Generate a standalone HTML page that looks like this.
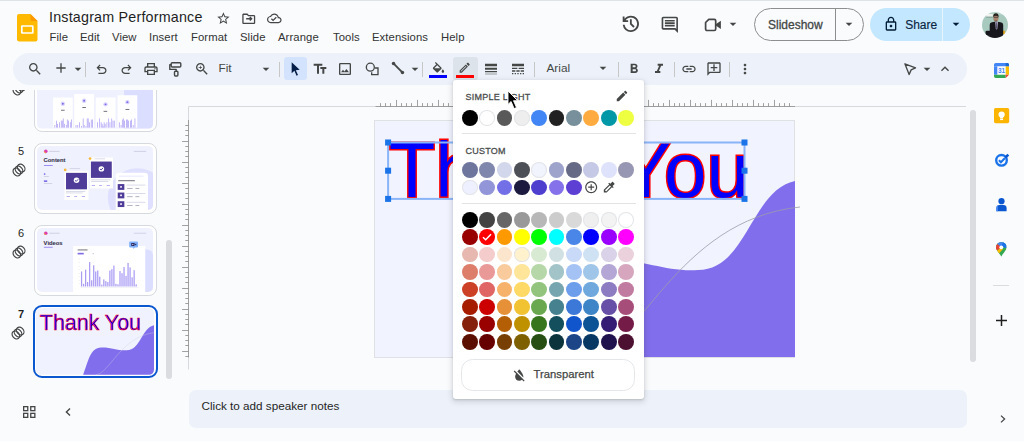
<!DOCTYPE html>
<html lang="en">
<head>
<meta charset="utf-8">
<title>Instagram Performance - Google Slides</title>
<style>
*{box-sizing:border-box;margin:0;padding:0}
html,body{width:1024px;height:441px;overflow:hidden;background:#f9fbfd;font-family:"Liberation Sans",sans-serif;color:#1f1f1f}
.abs{position:absolute}
#app{position:relative;width:1024px;height:441px;overflow:hidden;background:#f9fbfd}
#app>div,#app>svg{position:absolute}
#topline{left:0;top:0;width:1024px;height:1px;background:#dfe2e6}
#title{left:49px;top:9px;font-size:14.3px;line-height:17px;color:#1f1f1f;white-space:nowrap;letter-spacing:.2px}
.menu{top:30.600px;font-size:11.3px;line-height:13px;color:#333;white-space:nowrap;letter-spacing:.08px}
#toolbar{left:13px;top:53px;width:953.500px;height:32px;border-radius:16px;background:#edf2fa}
.tbtxt{font-size:11.8px;line-height:14px;color:#444746;white-space:nowrap;top:61px}
.sep{width:1px;height:15px;background:#c7c7c7;top:61.500px}
svg{position:absolute;overflow:visible}
.ic{fill:#444746}
.btnsel{left:283.500px;top:56.500px;width:23px;height:23px;border-radius:3px;background:#d3e3fd}
.btnact{left:453px;top:56.500px;width:24.500px;height:23px;border-radius:3px;background:#dde3ea}
#slideshow{left:754px;top:8.300px;width:110px;height:32.300px;border:1px solid #8c8f8d;border-radius:17px}
#slideshow span{position:absolute;left:13px;top:9px;font-size:12px;line-height:14px;color:#444746;-webkit-text-stroke:.3px #444746}
#slideshow i{position:absolute;left:79.700px;top:0;width:1px;height:30.500px;background:#8c8f8d}
#share{left:870.200px;top:8.300px;width:99.800px;height:32.300px;border-radius:17px;background:#c2e7ff}
#share span{position:absolute;left:35px;top:10px;font-size:12px;line-height:14px;color:#0a2540;-webkit-text-stroke:.15px #0a2540}
#share i{position:absolute;left:72px;top:0;width:1px;height:32.500px;background:#e8f4fd}
/* filmstrip */
#film{left:0;top:90px;width:180px;height:296px;overflow:hidden}
.thumb{position:absolute;left:34px;width:122.500px;height:71px;border:1px solid #d6d9dd;border-radius:8px;background:#fff;overflow:hidden}
.thumb>svg{left:2.200px;top:2.200px;border-radius:5px;overflow:hidden}
.num{position:absolute;left:11px;width:20px;text-align:center;font-size:11px;line-height:12px;color:#1f1f1f}
/* canvas */
#slide{left:374px;top:120px;width:421.400px;height:237.500px;background:#f1f3ff;border:1px solid #dfe1e5;overflow:hidden}
#notes{left:189px;top:390px;width:777.500px;height:38px;border-radius:7px;background:#edf2fa}
#notes span{position:absolute;left:12.500px;top:8.700px;font-size:11.7px;line-height:14px;color:#1f1f1f}
/* popup */
#popup{left:453px;top:80px;width:190.500px;height:318.500px;background:#fff;border-radius:3px;box-shadow:0 1px 2px rgba(60,64,67,.2),0 2px 5px 2px rgba(60,64,67,.13)}
#popup>div,#pin2>div,#pin2>span{position:absolute}
.hd{font-size:9px;line-height:10px;letter-spacing:.25px;color:#4a4d4c;-webkit-text-stroke:.28px #4a4d4c;left:12.500px;white-space:nowrap}
.c{width:15.800px;height:15.800px;border-radius:50%}
.hr{left:8.500px;width:174px;height:1px;background:#e3e3e3}
#transp{left:8.300px;top:278.300px;width:174.200px;height:31.800px;border:1px solid #e4e7ea;border-radius:11.500px}
#transp span{position:absolute;left:71.200px;top:8.400px;font-size:11.3px;line-height:13px;color:#444746;-webkit-text-stroke:.25px #444746;white-space:nowrap}
</style>
</head>
<body>
<div id="app">
<div id="topline"></div>
<!-- HEADER -->
<svg id="logo" style="left:17px;top:13.500px" width="20.500" height="27.500" viewBox="0 0 20.500 27.500">
  <path d="M2 0H13.500l7 7v18.500a2 2 0 0 1-2 2H2a2 2 0 0 1-2-2V2a2 2 0 0 1 2-2z" fill="#ffba00"/>
  <path d="M13.500 0l7 7h-5.500a1.500 1.500 0 0 1-1.500-1.500z" fill="#fb9a00"/>
  <rect x="4.800" y="12" width="11" height="7" rx="0.300" fill="none" stroke="#fff" stroke-width="1.700"/>
</svg>
<div id="title">Instagram Performance</div>
<div class="menu" style="left:49.500px">File</div>
<div class="menu" style="left:80px">Edit</div>
<div class="menu" style="left:112px">View</div>
<div class="menu" style="left:149px">Insert</div>
<div class="menu" style="left:191px">Format</div>
<div class="menu" style="left:240px">Slide</div>
<div class="menu" style="left:278px">Arrange</div>
<div class="menu" style="left:333px">Tools</div>
<div class="menu" style="left:372px">Extensions</div>
<div class="menu" style="left:441px">Help</div>
<!-- star / move / cloud -->
<svg class="ic" style="left:215.600px;top:11.300px" width="14.800" height="14.800" viewBox="0 0 24 24"><path d="M22 9.240l-7.190-.62L12 2 9.190 8.630 2 9.240l5.460 4.730L5.820 21 12 17.270 18.180 21l-1.630-7.030L22 9.240zM12 15.400l-3.760 2.270 1-4.280-3.320-2.880 4.380-.38L12 6.100l1.710 4.040 4.380.38-3.320 2.880 1 4.280L12 15.400z"/></svg>
<svg class="ic" style="left:240.700px;top:10.900px" width="15.500" height="15.500" viewBox="0 0 24 24"><path d="M20 6h-8l-2-2H4c-1.100 0-2 .9-2 2v12c0 1.100.9 2 2 2h16c1.100 0 2-.9 2-2V8c0-1.100-.9-2-2-2zm0 12H4V6h5.170l2 2H20v10zm-7.160-4.170l1.590 1.590L18 12l-3.590-3.410-1.580 1.580L13.660 11H8v2h5.660z"/></svg>
<svg class="ic" style="left:266.900px;top:10.800px" width="14.600" height="14.600" viewBox="0 0 24 24"><path d="M19.350 10.040C18.670 6.590 15.640 4 12 4 9.110 4 6.600 5.640 5.350 8.040 2.340 8.360 0 10.910 0 14c0 3.310 2.690 6 6 6h13c2.760 0 5-2.240 5-5 0-2.640-2.050-4.780-4.650-4.960zM19 18H6c-2.210 0-4-1.790-4-4 0-2.050 1.530-3.760 3.560-3.970l1.070-.11.500-.95C8.080 7.140 9.940 6 12 6c2.620 0 4.880 1.860 5.390 4.430l.3 1.500 1.530.11c1.560.1 2.780 1.410 2.780 2.960 0 1.650-1.350 3-3 3zm-9-3.820l-2.090-2.090L6.500 13.500 10 17l6.010-6.010-1.410-1.410z"/></svg>
<!-- history / comment / meet -->
<svg class="ic" style="left:620px;top:13.300px" width="21.700" height="21.700" viewBox="0 -960 960 960"><path d="M480-120q-138 0-240.500-91.500T122-440h82q14 104 92.500 172T480-200q117 0 198.500-81.500T760-480q0-117-81.500-198.500T480-760q-69 0-129 32t-101 88h110v80H120v-240h80v94q51-64 124.500-99T480-840q75 0 140.500 28.500t114 77q48.500 48.500 77 114T840-480q0 75-28.500 140.500t-77 114q-48.500 48.500-114 77T480-120Zm112-192L440-464v-216h80v184l128 128-56 56Z"/></svg>
<svg class="ic" style="left:660px;top:15.200px" width="19.600" height="19.600" viewBox="0 0 24 24"><path d="M21.990 4c0-1.100-.89-2-1.990-2H4c-1.100 0-2 .9-2 2v12c0 1.100.9 2 2 2h14l4 4-.01-18zM20 4v13.170L18.830 16H4V4h16zM6 12h12v2H6zm0-3h12v2H6zm0-3h12v2H6z"/></svg>
<svg style="left:704px;top:17px" width="18" height="16" viewBox="0 0 18 16"><path d="M4.800 2.300H10.300a1.400 1.400 0 0 1 1.400 1.400V12.100a1.400 1.400 0 0 1-1.400 1.400H3a1.400 1.400 0 0 1-1.400-1.400V5.500z" fill="none" stroke="#444746" stroke-width="1.700" stroke-linejoin="round"/><path d="M11.700 7.300l5.200-3.500v8.200l-5.200-3.500z" fill="#444746"/></svg>
<svg class="ic" style="left:724.800px;top:16.400px" width="16" height="16" viewBox="0 0 24 24"><path d="M7 10l5 5 5-5z"/></svg>
<!-- slideshow -->
<div id="slideshow"><span>Slideshow</span><i></i></div>
<svg class="ic" style="left:841px;top:16.400px" width="16" height="16" viewBox="0 0 24 24"><path d="M7 10l5 5 5-5z"/></svg>
<!-- share -->
<div id="share"><span>Share</span><i></i></div>
<svg style="left:883px;top:15.500px" width="16" height="16" viewBox="0 0 24 24"><path fill="#001d35" d="M18 8h-1V6c0-2.760-2.240-5-5-5S7 3.240 7 6v2H6c-1.100 0-2 .9-2 2v10c0 1.100.9 2 2 2h12c1.100 0 2-.9 2-2V10c0-1.100-.9-2-2-2zM9 6c0-1.660 1.340-3 3-3s3 1.340 3 3v2H9V6zm9 14H6V10h12v10zm-6-3c1.100 0 2-.9 2-2s-.9-2-2-2-2 .9-2 2 .9 2 2 2z"/></svg>
<svg style="left:948.200px;top:16.400px" width="16" height="16" viewBox="0 0 24 24"><path fill="#001d35" d="M7 10l5 5 5-5z"/></svg>
<!-- avatar -->
<svg style="left:982.200px;top:11.700px" width="26" height="26" viewBox="0 0 26 26">
  <defs><clipPath id="av"><circle cx="13" cy="13" r="13"/></clipPath><filter id="avb" x="-10%" y="-10%" width="120%" height="120%"><feGaussianBlur stdDeviation=".45"/></filter></defs>
  <g clip-path="url(#av)"><g filter="url(#avb)">
    <rect x="-2" y="-2" width="30" height="30" fill="#a8cabe"/>
    <rect x="-2" y="-2" width="30" height="5" fill="#b5d2c8"/>
    <rect x="4.300" y="2.100" width="6.500" height="2.600" rx=".5" fill="#f1f1ee"/>
    <rect x="4.300" y="4.700" width="6.500" height=".9" fill="#7d9a92"/>
    <path d="M3.500 23V20Q3.500 18.700 5 18.700H8.500V23z" fill="#16181b"/><path d="M5 23H8.500V27H7z" fill="#2a2d31"/>
    <rect x="21" y="18.700" width="2.200" height="3.500" fill="#e5a820"/>
    <path d="M7.700 26V12.800Q7.700 10.600 10 10.300L13.800 9.600L18.500 10.300Q21.200 10.600 21.200 12.800V26z" fill="#17181c"/>
    <path d="M13.100 9.500H16.100L15.400 16.800L14.600 17.800L13.800 16.800z" fill="#a9a3bd"/>
    <path d="M14.300 10.500H15L15.200 16.200L14.650 17L14.100 16.200z" fill="#4a4766"/>
    <ellipse cx="13.900" cy="6" rx="2.600" ry="3.400" fill="#a9826d"/>
    <path d="M11.200 5.200Q11 1.300 13.900 1.300Q16.900 1.300 16.600 5.200Q16 3.600 13.900 3.700Q11.800 3.600 11.200 5.200z" fill="#26201e"/>
    <path d="M11.700 5.300H16.200" stroke="#3a2f2b" stroke-width=".7"/>
    <path d="M12.600 8.300Q13.900 9.400 15.200 8.300L14.800 9.300H13z" fill="#3f302a"/>
  </g></g>
</svg>
<!-- TOOLBAR -->
<div id="toolbar"></div>
<div class="btnsel"></div>
<div class="btnact"></div>
<svg class="ic" style="left:26.750px;top:60.800px" width="16" height="16" viewBox="0 0 24 24"><path d="M15.500 14h-.79l-.28-.27C15.410 12.590 16 11.110 16 9.500 16 5.910 13.090 3 9.500 3S3 5.910 3 9.500 5.910 16 9.500 16c1.610 0 3.090-.59 4.230-1.570l.27.280v.790l5 4.990L20.490 19l-4.990-5zm-6 0C7.010 14 5 11.990 5 9.500S7.010 5 9.500 5 14 7.010 14 9.500 11.990 14 9.500 14z"/></svg>
<svg class="ic" style="left:52.700px;top:60.300px" width="16" height="16" viewBox="0 0 24 24"><path d="M19 13h-6v6h-2v-6H5v-2h6V5h2v6h6v2z"/></svg>
<svg class="ic" style="left:69.700px;top:61px" width="16" height="16" viewBox="0 0 24 24"><path d="M7 10l5 5 5-5z"/></svg>
<div class="sep" style="left:85.200px"></div>
<svg class="ic" style="left:93.700px;top:61.700px" width="15" height="15" viewBox="0 0 24 24"><path d="M7 19v-2h7.100q1.575 0 2.738-1T18 13.500 16.838 11 14.100 10H7.800l2.600 2.600L9 14 4 9l5-5 1.400 1.400L7.800 8h6.300q2.425 0 4.163 1.575T20 13.500t-1.737 3.925T14.100 19H7z"/></svg>
<svg class="ic" style="left:118.500px;top:61.700px" width="15" height="15" viewBox="0 0 24 24"><path transform="translate(24 0) scale(-1 1)" d="M7 19v-2h7.100q1.575 0 2.738-1T18 13.500 16.838 11 14.100 10H7.800l2.600 2.600L9 14 4 9l5-5 1.400 1.400L7.800 8h6.300q2.425 0 4.163 1.575T20 13.500t-1.737 3.925T14.100 19H7z"/></svg>
<svg class="ic" style="left:143.200px;top:60.500px" width="16" height="16" viewBox="0 0 24 24"><path d="M19 8h-1V3H6v5H5c-1.660 0-3 1.340-3 3v6h4v4h12v-4h4v-6c0-1.660-1.340-3-3-3zM8 5h8v3H8V5zm8 12v2H8v-4h8v2zm2-2v-2H6v2H4v-4c0-.55.450-1 1-1h14c.55 0 1 .45 1 1v4h-2z"/><circle cx="18" cy="11.500" r="1"/></svg>
<svg style="left:168px;top:61px" width="16" height="16" viewBox="0 0 16 16" fill="none" stroke="#444746" stroke-width="1.400" stroke-linejoin="round"><rect x="3.200" y="1.700" width="9.600" height="4.300" rx="1"/><path d="M3.200 3.800H1.800V8.400H8.200V10.200"/><rect x="6.500" y="10.200" width="3.400" height="4.800" rx=".9"/></svg>
<svg class="ic" style="left:193.600px;top:61.300px" width="16" height="16" viewBox="0 0 24 24"><path d="M15.500 14h-.79l-.28-.27C15.410 12.590 16 11.110 16 9.500 16 5.910 13.090 3 9.500 3S3 5.910 3 9.500 5.910 16 9.500 16c1.610 0 3.090-.59 4.230-1.570l.27.280v.790l5 4.990L20.490 19l-4.990-5zm-6 0C7.010 14 5 11.990 5 9.500S7.010 5 9.500 5 14 7.010 14 9.500 11.990 14 9.500 14z"/><path d="M12 10h-2v2H9v-2H7V9h2V7h1v2h2v1z"/></svg>
<div class="tbtxt" style="left:218.500px">Fit</div>
<svg class="ic" style="left:258.200px;top:61px" width="16" height="16" viewBox="0 0 24 24"><path d="M7 10l5 5 5-5z"/></svg>
<div class="sep" style="left:279.200px"></div>
<svg style="left:287px;top:61px" width="16" height="16" viewBox="0 0 24 24"><path fill="#041e49" d="M7 2l12 11.200-5.800.5 3.300 7.300-2.200 1-3.200-7.400L7 18.500V2z"/></svg>
<svg class="ic" style="left:311.500px;top:60.700px" width="16" height="16" viewBox="0 0 24 24"><path d="M2.500 4v3h5v12h3V7h5V4h-13zm19 5h-9v3h3v7h3v-7h3V9z"/></svg>
<svg class="ic" style="left:337.300px;top:61px" width="16" height="16" viewBox="0 0 24 24"><path d="M19 5v14H5V5h14m0-2H5c-1.100 0-2 .9-2 2v14c0 1.100.9 2 2 2h14c1.100 0 2-.9 2-2V5c0-1.100-.9-2-2-2zm-4.860 8.860l-3 3.870L9 13.140 6 17h12l-3.860-5.140z"/></svg>
<svg style="left:364.200px;top:60.700px" width="16" height="16" viewBox="0 0 24 24"><circle cx="9.500" cy="9.300" r="6" fill="none" stroke="#444746" stroke-width="2"/><path d="M16.500 10.500H21V20.500H11.500V17" fill="none" stroke="#444746" stroke-width="2"/></svg>
<svg style="left:389.900px;top:59.900px" width="16" height="16" viewBox="0 0 24 24"><path d="M5.500 5.500L18.500 18.500" stroke="#444746" stroke-width="2.800"/><circle cx="5.300" cy="5.300" r="2.600" fill="#444746"/><circle cx="18.700" cy="18.700" r="2.600" fill="#444746"/></svg>
<svg class="ic" style="left:406.600px;top:61px" width="16" height="16" viewBox="0 0 24 24"><path d="M7 10l5 5 5-5z"/></svg>
<div class="sep" style="left:422px"></div>
<svg class="ic" style="left:430.500px;top:61.700px" width="15" height="15" viewBox="0 0 24 24"><path d="M16.560 8.940L7.620 0 6.210 1.410l2.380 2.380-5.150 5.150c-.59.590-.59 1.540 0 2.120l5.500 5.500c.29.290.68.440 1.060.44s.77-.15 1.060-.44l5.500-5.500c.59-.58.590-1.530 0-2.120zM5.210 10L10 5.210 14.790 10H5.210zM19 11.500s-2 2.170-2 3.500c0 1.100.9 2 2 2s2-.9 2-2c0-1.330-2-3.500-2-3.500z"/></svg>
<div style="left:429px;top:75px;width:18px;height:2.800px;background:#0000ff"></div>
<svg class="ic" style="left:458.300px;top:61.100px" width="13.400" height="13.400" viewBox="0 0 24 24"><path d="M14.060 9.020l.92.920L5.920 19H5v-.92l9.060-9.060M17.660 3c-.25 0-.51.100-.7.290l-1.830 1.830 3.750 3.750 1.830-1.830c.39-.39.390-1.020 0-1.410l-2.340-2.340c-.2-.2-.45-.29-.71-.29zm-3.600 3.190L3 17.250V21h3.750L17.810 9.940l-3.750-3.750z"/></svg>
<div style="left:456px;top:75px;width:17.600px;height:2.800px;background:#ff0000"></div>
<svg class="ic" style="left:483.400px;top:60.900px" width="16" height="16" viewBox="0 0 24 24"><path d="M3 17h18v-2H3v2zm0 3h18v-1H3v1zm0-7h18v-3H3v3zm0-9v4h18V4H3z"/></svg>
<svg class="ic" style="left:510.400px;top:60.900px" width="16" height="16" viewBox="0 0 24 24"><path d="M3 16h5v-2H3v2zm6.500 0h5v-2h-5v2zm6.500 0h5v-2h-5v2zM3 20h2v-2H3v2zm4 0h2v-2H7v2zm4 0h2v-2h-2v2zm4 0h2v-2h-2v2zm4 0h2v-2h-2v2zM3 12h8v-2H3v2zm10 0h8v-2h-8v2zM3 4v4h18V4H3z"/></svg>
<div class="sep" style="left:534px"></div>
<div class="tbtxt" style="left:546.500px">Arial</div>
<svg class="ic" style="left:595.400px;top:60.200px" width="16" height="16" viewBox="0 0 24 24"><path d="M7 10l5 5 5-5z"/></svg>
<div class="sep" style="left:618.400px"></div>
<svg class="ic" style="left:625.800px;top:60.900px" width="16" height="16" viewBox="0 0 24 24"><path d="M15.600 10.790c.97-.67 1.650-1.770 1.650-2.790 0-2.260-1.750-4-4-4H7v14h7.040c2.090 0 3.710-1.700 3.710-3.790 0-1.520-.86-2.820-2.150-3.420zM10 6.500h3c.83 0 1.500.67 1.500 1.500s-.67 1.500-1.500 1.500h-3v-3zm3.500 9H10v-3h3.500c.83 0 1.500.67 1.500 1.500s-.67 1.500-1.500 1.500z"/></svg>
<svg class="ic" style="left:651px;top:60.900px" width="16" height="16" viewBox="0 0 24 24"><path d="M10 4v3h2.210l-3.420 8H6v3h8v-3h-2.210l3.420-8H18V4z"/></svg>
<div class="sep" style="left:674px"></div>
<svg class="ic" style="left:681.400px;top:60.800px" width="16" height="16" viewBox="0 0 24 24"><path d="M3.900 12c0-1.710 1.390-3.100 3.100-3.100h4V7H7c-2.760 0-5 2.240-5 5s2.240 5 5 5h4v-1.900H7c-1.710 0-3.100-1.390-3.100-3.100zM8 13h8v-2H8v2zm9-6h-4v1.900h4c1.710 0 3.100 1.390 3.100 3.100s-1.390 3.100-3.100 3.100h-4V17h4c2.760 0 5-2.240 5-5s-2.240-5-5-5z"/></svg>
<svg class="ic" style="left:706.400px;top:61.100px" width="16" height="16" viewBox="0 0 24 24"><path transform="translate(24 0) scale(-1 1)" d="M22 4c0-1.100-.9-2-2-2H4c-1.100 0-2 .9-2 2v12c0 1.100.9 2 2 2h14l4 4V4zm-2 13.170L18.830 16H4V4h16v13.170zM13 5h-2v4H7v2h4v4h2v-4h4V9h-4z"/></svg>
<div class="sep" style="left:729.400px"></div>
<svg class="ic" style="left:737.300px;top:60.600px" width="16" height="16" viewBox="0 0 24 24"><path d="M12 8c1.100 0 2-.9 2-2s-.9-2-2-2-2 .9-2 2 .9 2 2 2zm0 2c-1.100 0-2 .9-2 2s.9 2 2 2 2-.9 2-2-.9-2-2-2zm0 6c-1.100 0-2 .9-2 2s.9 2 2 2 2-.9 2-2-.9-2-2-2z"/></svg>
<svg style="left:902.200px;top:60.700px" width="16" height="16" viewBox="0 0 24 24"><path d="M4.300 4.300L20.300 10.300 13.700 13.300 10.700 20.300z" fill="none" stroke="#444746" stroke-width="2" stroke-linejoin="round"/></svg>
<svg class="ic" style="left:918.700px;top:60.900px" width="16" height="16" viewBox="0 0 24 24"><path d="M7 10l5 5 5-5z"/></svg>
<svg class="ic" style="left:936.500px;top:61.200px" width="16" height="16" viewBox="0 0 24 24"><path d="M7.410 15.410L12 10.830l4.590 4.580L18 14l-6-6-6 6z"/></svg>
<!-- FILMSTRIP -->
<div id="film">
  <!-- slide 4 -->
  <svg style="left:11.700px;top:-8.400px" width="14" height="14" viewBox="0 0 14 14" fill="none" stroke="#444746" stroke-width="1.200"><ellipse cx="4.800" cy="9" rx="4.300" ry="3.300" transform="rotate(50 4.800 9)"/><ellipse cx="7" cy="7" rx="4.300" ry="3.300" transform="rotate(50 7 7)"/><ellipse cx="9.200" cy="5" rx="4.300" ry="3.300" transform="rotate(50 9.200 5)"/></svg>
  <div class="thumb" style="top:-29px">
    <svg width="116.100" height="64.600" viewBox="0 0 420 237" preserveAspectRatio="none">
      <rect width="420" height="237" fill="#f0f1ff"/>
      <path d="M315 95L350 60H420V237H315z" fill="#dcdeff"/>
      <g fill="#fff"><rect x="58.300" y="123" width="70.700" height="111"/><rect x="134.700" y="110" width="71.900" height="124"/><rect x="212.700" y="123" width="71.300" height="111"/><rect x="291.300" y="114.700" width="71.500" height="119"/></g>
      <g fill="#d9d4ff"><circle cx="93.500" cy="146" r="8"/><circle cx="170.500" cy="135" r="8"/><circle cx="248" cy="148" r="8"/><circle cx="327" cy="140" r="8"/></g>
      <g fill="#7d6be8"><circle cx="93.500" cy="146" r="3.500"/><circle cx="170.500" cy="135" r="3.500"/><circle cx="248" cy="148" r="3.500"/><circle cx="327" cy="140" r="3.500"/></g>
      <g fill="#55525f"><rect x="87" y="168" width="13" height="3"/><rect x="164" y="158" width="13" height="3"/><rect x="241" y="172" width="13" height="3"/><rect x="320" y="165" width="14" height="3"/></g>
      <g fill="#a99cf5"><rect x="63.3" y="223.7" width="2.6" height="10.0"/><rect x="69.8" y="207.7" width="2.6" height="26.0"/><rect x="73.4" y="219.7" width="2.6" height="14.0"/><rect x="79.9" y="213.7" width="2.6" height="20.0"/><rect x="86.4" y="207.7" width="2.6" height="26.0"/><rect x="90.0" y="207.7" width="2.6" height="26.0"/><rect x="93.6" y="199.7" width="2.6" height="34.0"/><rect x="98.1" y="219.7" width="2.6" height="14.0"/><rect x="104.6" y="223.7" width="2.6" height="10.0"/><rect x="108.2" y="203.7" width="2.6" height="30.0"/><rect x="112.7" y="207.7" width="2.6" height="26.0"/><rect x="119.2" y="213.7" width="2.6" height="20.0"/><rect x="123.7" y="203.7" width="2.6" height="30.0"/><rect x="139.7" y="223.7" width="2.6" height="10.0"/><rect x="146.2" y="223.7" width="2.6" height="10.0"/><rect x="152.7" y="213.7" width="2.6" height="20.0"/><rect x="159.2" y="227.7" width="2.6" height="6.0"/><rect x="165.7" y="199.7" width="2.6" height="34.0"/><rect x="169.3" y="223.7" width="2.6" height="10.0"/><rect x="175.8" y="227.7" width="2.6" height="6.0"/><rect x="180.3" y="199.7" width="2.6" height="34.0"/><rect x="183.9" y="199.7" width="2.6" height="34.0"/><rect x="188.4" y="213.7" width="2.6" height="20.0"/><rect x="194.9" y="203.7" width="2.6" height="30.0"/><rect x="199.4" y="203.7" width="2.6" height="30.0"/><rect x="217.7" y="213.7" width="2.6" height="20.0"/><rect x="224.2" y="199.7" width="2.6" height="34.0"/><rect x="230.7" y="213.7" width="2.6" height="20.0"/><rect x="234.3" y="219.7" width="2.6" height="14.0"/><rect x="237.9" y="227.7" width="2.6" height="6.0"/><rect x="241.5" y="213.7" width="2.6" height="20.0"/><rect x="245.1" y="219.7" width="2.6" height="14.0"/><rect x="251.6" y="213.7" width="2.6" height="20.0"/><rect x="258.1" y="199.7" width="2.6" height="34.0"/><rect x="262.6" y="213.7" width="2.6" height="20.0"/><rect x="269.1" y="199.7" width="2.6" height="34.0"/><rect x="273.6" y="207.7" width="2.6" height="26.0"/><rect x="278.1" y="207.7" width="2.6" height="26.0"/><rect x="296.3" y="213.7" width="2.6" height="20.0"/><rect x="302.8" y="223.7" width="2.6" height="10.0"/><rect x="307.3" y="203.7" width="2.6" height="30.0"/><rect x="310.9" y="199.7" width="2.6" height="34.0"/><rect x="315.4" y="207.7" width="2.6" height="26.0"/><rect x="321.9" y="203.7" width="2.6" height="30.0"/><rect x="325.5" y="203.7" width="2.6" height="30.0"/><rect x="330.0" y="207.7" width="2.6" height="26.0"/><rect x="336.5" y="207.7" width="2.6" height="26.0"/><rect x="340.1" y="203.7" width="2.6" height="30.0"/><rect x="346.6" y="223.7" width="2.6" height="10.0"/><rect x="353.1" y="199.7" width="2.6" height="34.0"/></g>
    </svg>
  </div>
  <!-- slide 5 -->
  <div class="num" style="top:55px">5</div>
  <svg style="left:11.700px;top:73.100px" width="14" height="14" viewBox="0 0 14 14" fill="none" stroke="#444746" stroke-width="1.200"><ellipse cx="4.800" cy="9" rx="4.300" ry="3.300" transform="rotate(50 4.800 9)"/><ellipse cx="7" cy="7" rx="4.300" ry="3.300" transform="rotate(50 7 7)"/><ellipse cx="9.200" cy="5" rx="4.300" ry="3.300" transform="rotate(50 9.200 5)"/></svg>
  <div class="thumb" style="top:52.700px">
    <svg width="116.100" height="64.600" viewBox="0 0 420 237" preserveAspectRatio="none">
      <rect width="420" height="237" fill="#f0f1ff"/>
      <circle cx="363" cy="189" r="107" fill="#dfe0ff"/>
      <circle cx="31.800" cy="19.700" r="6.500" fill="#d940b0"/><path d="M25.500 18a6.500 6.500 0 0 0 8 8z" fill="#f9a23c"/>
      <rect x="44" y="18" width="38" height="3" fill="#c9cada"/><rect x="350" y="18" width="45" height="3" fill="#c9cade"/>
      <text x="24" y="60" font-family="Liberation Sans, sans-serif" font-weight="bold" font-size="21" fill="#343249" stroke="#343249" stroke-width="0.300">Content</text>
      <rect x="25" y="70" width="32" height="3" fill="#8a78ef"/>
      <rect x="25" y="100" width="5" height="6" fill="#7d6be8"/><rect x="25" y="111" width="18" height="2.500" fill="#c5c6d8"/>
      <rect x="25" y="126" width="12" height="6" fill="#7d6be8"/><rect x="25" y="137" width="30" height="2.500" fill="#c5c6d8"/>
      <rect x="99.700" y="91" width="86.500" height="107" fill="#fff"/>
      <rect x="105" y="98.600" width="75.800" height="60.400" fill="#4f3c99"/>
      <circle cx="143" cy="126" r="10" fill="#fff"/><path d="M138 126l4 4 7-8" stroke="#4f3c99" stroke-width="3.500" fill="none"/>
      <rect x="105" y="165" width="70" height="2.500" fill="#c9cade"/><rect x="105" y="171" width="60" height="2.500" fill="#c9cade"/>
      <rect x="107" y="184" width="12" height="3" fill="#a99cf5"/><rect x="135" y="184" width="10" height="3" fill="#a99cf5"/><rect x="162" y="184" width="12" height="3" fill="#a99cf5"/>
      <circle cx="102" cy="88" r="5" fill="#f5b93e"/>
      <rect x="118" y="82" width="38" height="2.500" fill="#c9cade"/>
      <rect x="192" y="42" width="82.800" height="113.800" fill="#fff"/>
      <rect x="195" y="57" width="75.500" height="60" fill="#4f3c99"/>
      <circle cx="233" cy="84" r="10" fill="#fff"/><path d="M228 84l4 4 7-8" stroke="#4f3c99" stroke-width="3.500" fill="none"/>
      <rect x="196" y="123" width="70" height="2.500" fill="#c9cade"/><rect x="196" y="129" width="62" height="2.500" fill="#c9cade"/>
      <rect x="198" y="143" width="12" height="3" fill="#a99cf5"/><rect x="225" y="143" width="10" height="3" fill="#a99cf5"/><rect x="252" y="143" width="12" height="3" fill="#a99cf5"/>
      <circle cx="192" cy="46" r="5" fill="#f5b93e"/>
      <rect x="208" y="46" width="38" height="2.500" fill="#c9cade"/>
      <rect x="284.800" y="98.600" width="116.600" height="160" rx="12" fill="#fff"/>
      <rect x="296" y="108" width="90" height="6" rx="3" fill="#eeefff"/>
      <rect x="294" y="126" width="60" height="3" fill="#55525f"/>
      <g fill="#4f3c99"><rect x="292" y="139.700" width="24" height="21.300"/><rect x="292" y="170.800" width="24" height="21.300"/><rect x="292" y="202.600" width="24" height="21.400"/></g>
      <g fill="#fff"><rect x="301" y="147" width="6" height="6"/><rect x="301" y="178" width="6" height="6"/><rect x="301" y="210" width="6" height="6"/></g>
      <g fill="#c9cade"><rect x="324" y="142" width="68" height="2.500"/><rect x="324" y="173" width="68" height="2.500"/><rect x="324" y="205" width="68" height="2.500"/></g>
      <g fill="#8d8fa6"><rect x="326" y="154" width="20" height="2.500"/><rect x="356" y="154" width="14" height="2.500"/><rect x="326" y="185" width="20" height="2.500"/><rect x="356" y="185" width="14" height="2.500"/><rect x="326" y="217" width="20" height="2.500"/><rect x="356" y="217" width="14" height="2.500"/></g>
    </svg>
  </div>
  <!-- slide 6 -->
  <div class="num" style="top:137px">6</div>
  <svg style="left:11.700px;top:155px" width="14" height="14" viewBox="0 0 14 14" fill="none" stroke="#444746" stroke-width="1.200"><ellipse cx="4.800" cy="9" rx="4.300" ry="3.300" transform="rotate(50 4.800 9)"/><ellipse cx="7" cy="7" rx="4.300" ry="3.300" transform="rotate(50 7 7)"/><ellipse cx="9.200" cy="5" rx="4.300" ry="3.300" transform="rotate(50 9.200 5)"/></svg>
  <div class="thumb" style="top:134.500px">
    <svg width="116.100" height="64.600" viewBox="0 0 420 237" preserveAspectRatio="none">
      <rect width="420" height="237" fill="#f0f1ff"/>
      <path d="M391 78.600h10q19 4 19 24V237H391z" fill="#dcdeff"/>
      <circle cx="31.800" cy="19" r="6.500" fill="#d940b0"/><path d="M25.500 17.300a6.500 6.500 0 0 0 8 8z" fill="#f9a23c"/>
      <rect x="44" y="17.500" width="38" height="3" fill="#c9cada"/><rect x="350" y="17.500" width="45" height="3" fill="#c9cade"/>
      <text x="24" y="60.800" font-family="Liberation Sans, sans-serif" font-weight="bold" font-size="21" fill="#343249" stroke="#343249" stroke-width="0.300">Videos</text>
      <rect x="25" y="69" width="32" height="3" fill="#8a78ef"/>
      <rect x="130.500" y="65.800" width="261" height="175" fill="#fff"/>
      <rect x="147" y="79" width="36" height="3" fill="#55525f"/>
      <rect x="147" y="91" width="22" height="6" fill="#7d6be8"/><rect x="201" y="92" width="5" height="4" fill="#c9cade"/>
      <g fill="#d5d6e4"><rect x="151" y="113" width="4" height="1.500"/><rect x="151" y="126" width="4" height="1.500"/><rect x="151" y="139" width="4" height="1.500"/><rect x="151" y="152" width="4" height="1.500"/><rect x="151" y="165" width="4" height="1.500"/><rect x="151" y="178" width="4" height="1.500"/><rect x="151" y="191" width="4" height="1.500"/><rect x="151" y="204" width="4" height="1.500"/><rect x="157" y="216" width="210" height="1.500"/></g>
      <g fill="#a99cf5"><rect x="159.0" y="159.4" width="4.5" height="55.1"/><rect x="166.3" y="204.8" width="4.5" height="9.7"/><rect x="173.6" y="152.9" width="4.5" height="61.6"/><rect x="180.9" y="198.3" width="4.5" height="16.2"/><rect x="188.3" y="125.0" width="4.5" height="89.5"/><rect x="195.6" y="191.8" width="4.5" height="22.7"/><rect x="202.9" y="136.7" width="4.5" height="77.8"/><rect x="210.2" y="159.4" width="4.5" height="55.1"/><rect x="217.5" y="156.1" width="4.5" height="58.4"/><rect x="224.8" y="178.8" width="4.5" height="35.7"/><rect x="232.1" y="208.0" width="4.5" height="6.5"/><rect x="239.5" y="188.6" width="4.5" height="25.9"/><rect x="246.8" y="195.0" width="4.5" height="19.5"/><rect x="254.1" y="198.3" width="4.5" height="16.2"/><rect x="261.4" y="156.1" width="4.5" height="58.4"/><rect x="268.7" y="150.9" width="4.5" height="63.6"/><rect x="276.0" y="138.0" width="4.5" height="76.5"/><rect x="283.3" y="204.8" width="4.5" height="9.7"/><rect x="290.7" y="206.7" width="4.5" height="7.8"/><rect x="298.0" y="158.1" width="4.5" height="56.4"/><rect x="305.3" y="165.9" width="4.5" height="48.6"/><rect x="312.6" y="143.2" width="4.5" height="71.3"/><rect x="319.9" y="175.6" width="4.5" height="38.9"/><rect x="327.2" y="128.2" width="4.5" height="86.3"/><rect x="334.5" y="144.5" width="4.5" height="70.0"/><rect x="341.9" y="180.8" width="4.5" height="33.7"/><rect x="349.2" y="154.8" width="4.5" height="59.7"/><rect x="356.5" y="206.7" width="4.5" height="7.8"/></g>
      <rect x="333.500" y="49.700" width="32" height="22" rx="4" fill="#7fb0fb"/><path d="M345 71l5 5 5-5z" fill="#7fb0fb"/>
      <rect x="341" y="55" width="12" height="11" rx="1.500" fill="#2a2560"/><path d="M353 60.500l6-4v8z" fill="#2a2560"/><path d="M345 57.500l5 3-5 3z" fill="#fff"/>
    </svg>
  </div>
  <!-- slide 7 (selected) -->
  <div class="num" style="top:218px;font-weight:bold">7</div>
  <svg style="left:11.400px;top:236.200px" width="14" height="14" viewBox="0 0 14 14" fill="none" stroke="#444746" stroke-width="1.200"><ellipse cx="4.800" cy="9" rx="4.300" ry="3.300" transform="rotate(50 4.800 9)"/><ellipse cx="7" cy="7" rx="4.300" ry="3.300" transform="rotate(50 7 7)"/><ellipse cx="9.200" cy="5" rx="4.300" ry="3.300" transform="rotate(50 9.200 5)"/></svg>
  <div class="thumb" style="left:32.700px;top:214.500px;width:125px;height:73.700px;border:2px solid #0b57d0;border-radius:9px">
    <svg width="118" height="66.700" viewBox="0 0 420 237" preserveAspectRatio="none" style="left:1.500px;top:1.500px;overflow:hidden;border-radius:5.500px">
      <rect width="420" height="237" fill="#f1f2ff"/>
      <path d="M167.700 237C186 190 192 141 232 140C270 139 290 152 323 150C372 150 376 70 420 61V237z" fill="#816eec"/>
      <path d="M212 237C262 235 300 100 425 87" fill="none" stroke="#cfcde6" stroke-width="1.300"/>
      <text x="13.700" y="77.500" transform="translate(0 77.500) scale(1 1.03) translate(0 -77.500)" font-family="Liberation Sans, sans-serif" font-size="76.200" fill="#0000ff" stroke="#ff0000" stroke-width="1.900">Thank You</text>
    </svg>
  </div>
</div>
<!-- filmstrip scrollbar -->
<div style="left:166.300px;top:240px;width:5.600px;height:139px;border-radius:3px;background:#dadce0"></div>
<!-- bottom-left controls -->
<svg style="left:22.700px;top:405.800px" width="12.500" height="12" viewBox="0 0 12.500 12" fill="none" stroke="#444746" stroke-width="1.300"><rect x=".65" y=".65" width="4.100" height="4"/><rect x="7.750" y=".65" width="4.100" height="4"/><rect x=".65" y="7.350" width="4.100" height="4"/><rect x="7.750" y="7.350" width="4.100" height="4"/></svg>
<svg style="left:64.500px;top:408.300px" width="6" height="8" viewBox="0 0 6 8"><path d="M5 .6L1.400 4 5 7.400" fill="none" stroke="#444746" stroke-width="1.400"/></svg>
<!-- CANVAS -->
<svg style="left:0;top:0" width="1024" height="441" viewBox="0 0 1024 441" fill="none">
  <path d="M188.500 369.500V106.500H966" stroke="#d6d9dd" stroke-width="1"/>
  <path d="M375.500 106.500H795" stroke="#9e9e9e" stroke-width="1"/>
  <path d="M188.500 120V357.500" stroke="#9e9e9e" stroke-width="1"/>
  <path d="M380.5 103.1V106.5M385.5 103.1V106.5M390.5 103.1V106.5M396.5 99.9V106.5M401.5 103.1V106.5M406.5 103.1V106.5M411.5 103.1V106.5M417.5 99.9V106.5M422.5 103.1V106.5M427.5 103.1V106.5M432.5 103.1V106.5M438.5 99.9V106.5M443.5 103.1V106.5M448.5 103.1V106.5M453.5 103.1V106.5M459.5 99.9V106.5M464.5 103.1V106.5M469.5 103.1V106.5M474.5 103.1V106.5M480.5 99.9V106.5M485.5 103.1V106.5M490.5 103.1V106.5M495.5 103.1V106.5M501.5 99.9V106.5M506.5 103.1V106.5M511.5 103.1V106.5M516.5 103.1V106.5M522.5 99.9V106.5M527.5 103.1V106.5M532.5 103.1V106.5M537.5 103.1V106.5M543.5 99.9V106.5M548.5 103.1V106.5M553.5 103.1V106.5M558.5 103.1V106.5M564.5 99.9V106.5M569.5 103.1V106.5M574.5 103.1V106.5M579.5 103.1V106.5M585.5 99.9V106.5M590.5 103.1V106.5M595.5 103.1V106.5M600.5 103.1V106.5M606.5 99.9V106.5M611.5 103.1V106.5M616.5 103.1V106.5M621.5 103.1V106.5M627.5 99.9V106.5M632.5 103.1V106.5M637.5 103.1V106.5M642.5 103.1V106.5M648.5 99.9V106.5M653.5 103.1V106.5M658.5 103.1V106.5M663.5 103.1V106.5M669.5 99.9V106.5M674.5 103.1V106.5M679.5 103.1V106.5M684.5 103.1V106.5M690.5 99.9V106.5M695.5 103.1V106.5M700.5 103.1V106.5M705.5 103.1V106.5M711.5 99.9V106.5M716.5 103.1V106.5M721.5 103.1V106.5M726.5 103.1V106.5M732.5 99.9V106.5M737.5 103.1V106.5M742.5 103.1V106.5M747.5 103.1V106.5M753.5 99.9V106.5M758.5 103.1V106.5M763.5 103.1V106.5M768.5 103.1V106.5M774.5 99.9V106.5M779.5 103.1V106.5M784.5 103.1V106.5M789.5 103.1V106.5" stroke="#8a8a8a" stroke-width=".8"/>
  <path d="M185.3 125.5H188.5M185.3 130.5H188.5M185.3 135.5H188.5M182.1 141.5H188.5M185.3 146.5H188.5M185.3 151.5H188.5M185.3 156.5H188.5M182.1 162.5H188.5M185.3 167.5H188.5M185.3 172.5H188.5M185.3 177.5H188.5M182.1 183.5H188.5M185.3 188.5H188.5M185.3 193.5H188.5M185.3 198.5H188.5M182.1 204.5H188.5M185.3 209.5H188.5M185.3 214.5H188.5M185.3 219.5H188.5M182.1 225.5H188.5M185.3 230.5H188.5M185.3 235.5H188.5M185.3 240.5H188.5M182.1 246.5H188.5M185.3 251.5H188.5M185.3 256.5H188.5M185.3 261.5H188.5M182.1 267.5H188.5M185.3 272.5H188.5M185.3 277.5H188.5M185.3 282.5H188.5M182.1 288.5H188.5M185.3 293.5H188.5M185.3 298.5H188.5M185.3 303.5H188.5M182.1 309.5H188.5M185.3 314.5H188.5M185.3 319.5H188.5M185.3 324.5H188.5M182.1 330.5H188.5M185.3 335.5H188.5M185.3 340.5H188.5M185.3 345.5H188.5M182.1 351.5H188.5M185.3 356.5H188.5" stroke="#8a8a8a" stroke-width=".8"/>
</svg>
<div style="left:970.300px;top:109.500px;width:5.700px;height:252px;border-radius:3px;background:#dadce0"></div>
<div id="slide"></div>
<svg style="left:375px;top:120px" width="420" height="237" viewBox="0 0 420 237">
  <defs><clipPath id="sc"><rect width="420" height="237"/></clipPath></defs>
  <path clip-path="url(#sc)" d="M167.700 237C186 190 192 141 232 140C270 139 290 152 323 150C372 150 376 70 420 61V237z" fill="#816eec"/>
  <path d="M212 237C262 235 300 100 425 87" fill="none" stroke="#9c9cab" stroke-width=".8"/>
  <text x="13.700" y="77.500" transform="translate(0 77.500) scale(1 1.03) translate(0 -77.500)" font-family="Liberation Sans, sans-serif" font-size="76.200" fill="#0000ff" stroke="#ff0000" stroke-width="2.800" paint-order="stroke">Thank You</text>
  <rect x="13.100" y="22.500" width="356.400" height="56.400" fill="none" stroke="#8ab4f8" stroke-width="2"/>
  <g fill="#1a73e8"><rect x="10.100" y="19.500" width="6" height="6"/><rect x="10.100" y="47.700" width="6" height="6"/><rect x="10.100" y="75.900" width="6" height="6"/><rect x="188.300" y="19.500" width="6" height="6"/><rect x="188.300" y="75.900" width="6" height="6"/><rect x="366.500" y="19.500" width="6" height="6"/><rect x="366.500" y="47.700" width="6" height="6"/><rect x="366.500" y="75.900" width="6" height="6"/></g>
</svg>
<div id="notes"><span>Click to add speaker notes</span></div>
<!-- POPUP -->
<div id="popup"><div id="pin2" style="left:0;top:.5px;width:190px;height:316px">
<div class="hd" style="top:11.600px">SIMPLE LIGHT</div>
<svg style="left:161.750px;top:8.250px" width="14" height="14" viewBox="0 0 24 24"><path fill="#444746" d="M3 17.250V21h3.750L17.810 9.940l-3.750-3.750L3 17.250zM20.710 7.040c.39-.39.39-1.020 0-1.410l-2.340-2.340c-.39-.39-1.020-.39-1.410 0l-1.830 1.830 3.750 3.750 1.830-1.830z"/></svg>
<div class="c" style="left:8.9px;top:29.8px;background:#000000"></div><div class="c" style="left:26.3px;top:29.8px;background:#ffffff;box-shadow:inset 0 0 0 1px #e3e5e8"></div><div class="c" style="left:43.6px;top:29.8px;background:#595959"></div><div class="c" style="left:61.0px;top:29.8px;background:#eeeeee;box-shadow:inset 0 0 0 1px #e3e5e8"></div><div class="c" style="left:78.3px;top:29.8px;background:#4285f4"></div><div class="c" style="left:95.7px;top:29.8px;background:#212121"></div><div class="c" style="left:113.1px;top:29.8px;background:#78909c"></div><div class="c" style="left:130.4px;top:29.8px;background:#ffab40"></div><div class="c" style="left:147.8px;top:29.8px;background:#0097a7"></div><div class="c" style="left:165.1px;top:29.8px;background:#eeff41"></div>
<div class="hr" style="top:52.600px"></div>
<div class="hd" style="top:65.400px">CUSTOM</div>
<div class="c" style="left:8.9px;top:81.6px;background:#6e769e"></div><div class="c" style="left:26.3px;top:81.6px;background:#8087ac"></div><div class="c" style="left:43.6px;top:81.6px;background:#d3d7ec"></div><div class="c" style="left:61.0px;top:81.6px;background:#4d5057"></div><div class="c" style="left:78.3px;top:81.6px;background:#f1f3fd;box-shadow:inset 0 0 0 1px #e3e5e8"></div><div class="c" style="left:95.7px;top:81.6px;background:#9da3cb"></div><div class="c" style="left:113.1px;top:81.6px;background:#666a85"></div><div class="c" style="left:130.4px;top:81.6px;background:#c5c9e6"></div><div class="c" style="left:147.8px;top:81.6px;background:#dfe2fb"></div><div class="c" style="left:165.1px;top:81.6px;background:#9797b3"></div>
<div class="c" style="left:8.9px;top:99.2px;background:#eff0ff;box-shadow:inset 0 0 0 1px #e3e5e8"></div><div class="c" style="left:26.3px;top:99.2px;background:#9296d8"></div><div class="c" style="left:43.6px;top:99.2px;background:#736fe7"></div><div class="c" style="left:61.0px;top:99.2px;background:#1c1b3f"></div><div class="c" style="left:78.3px;top:99.2px;background:#4e3fcf"></div><div class="c" style="left:95.7px;top:99.2px;background:#8571ea"></div><div class="c" style="left:113.1px;top:99.2px;background:#5d3fd3"></div>
<svg style="left:130.900px;top:99.500px" width="14.400" height="14.400" viewBox="0 0 24 24"><path fill="#444746" d="M13 7h-2v4H7v2h4v4h2v-4h4v-2h-4V7zm-1-5C6.480 2 2 6.480 2 12s4.480 10 10 10 10-4.480 10-10S17.520 2 12 2zm0 18c-4.410 0-8-3.590-8-8s3.590-8 8-8 8 3.590 8 8-3.590 8-8 8z"/></svg>
<svg style="left:148.600px;top:99.600px" width="14.400" height="14.400" viewBox="0 0 24 24"><path fill="#444746" d="M20.710 5.630l-2.340-2.340c-.39-.39-1.020-.39-1.410 0l-3.120 3.120-1.930-1.910-1.410 1.410 1.420 1.420L3 16.250V21h4.750l8.920-8.920 1.420 1.420 1.410-1.410-1.920-1.920 3.120-3.120c.4-.4.400-1.030.01-1.420zM6.920 19L5 17.080l8.060-8.060 1.920 1.920L6.920 19z"/></svg>
<div class="hr" style="top:122.500px"></div>
<div class="c" style="left:8.9px;top:131.3px;background:#000000"></div><div class="c" style="left:26.3px;top:131.3px;background:#434343"></div><div class="c" style="left:43.6px;top:131.3px;background:#666666"></div><div class="c" style="left:61.0px;top:131.3px;background:#999999"></div><div class="c" style="left:78.3px;top:131.3px;background:#b7b7b7"></div><div class="c" style="left:95.7px;top:131.3px;background:#cccccc"></div><div class="c" style="left:113.1px;top:131.3px;background:#d9d9d9"></div><div class="c" style="left:130.4px;top:131.3px;background:#efefef;box-shadow:inset 0 0 0 1px #e3e5e8"></div><div class="c" style="left:147.8px;top:131.3px;background:#f3f3f3;box-shadow:inset 0 0 0 1px #e3e5e8"></div><div class="c" style="left:165.1px;top:131.3px;background:#ffffff;box-shadow:inset 0 0 0 1px #e3e5e8"></div>
<div class="c" style="left:8.9px;top:148.7px;background:#980000"></div><div class="c" style="left:26.3px;top:148.7px;background:#ff0000"></div><div class="c" style="left:43.6px;top:148.7px;background:#ff9900"></div><div class="c" style="left:61.0px;top:148.7px;background:#ffff00"></div><div class="c" style="left:78.3px;top:148.7px;background:#00ff00"></div><div class="c" style="left:95.7px;top:148.7px;background:#00ffff"></div><div class="c" style="left:113.1px;top:148.7px;background:#4a86e8"></div><div class="c" style="left:130.4px;top:148.7px;background:#0000ff"></div><div class="c" style="left:147.8px;top:148.7px;background:#9900ff"></div><div class="c" style="left:165.1px;top:148.7px;background:#ff00ff"></div>
<div class="c" style="left:8.9px;top:166.2px;background:#e6b8af"></div><div class="c" style="left:26.3px;top:166.2px;background:#f4cccc"></div><div class="c" style="left:43.6px;top:166.2px;background:#fce5cd"></div><div class="c" style="left:61.0px;top:166.2px;background:#fff2cc;box-shadow:inset 0 0 0 1px #e3e5e8"></div><div class="c" style="left:78.3px;top:166.2px;background:#d9ead3"></div><div class="c" style="left:95.7px;top:166.2px;background:#d0e0e3"></div><div class="c" style="left:113.1px;top:166.2px;background:#c9daf8"></div><div class="c" style="left:130.4px;top:166.2px;background:#cfe2f3"></div><div class="c" style="left:147.8px;top:166.2px;background:#d9d2e9"></div><div class="c" style="left:165.1px;top:166.2px;background:#ead1dc"></div>
<div class="c" style="left:8.9px;top:183.6px;background:#dd7e6b"></div><div class="c" style="left:26.3px;top:183.6px;background:#ea9999"></div><div class="c" style="left:43.6px;top:183.6px;background:#f9cb9c"></div><div class="c" style="left:61.0px;top:183.6px;background:#ffe599"></div><div class="c" style="left:78.3px;top:183.6px;background:#b6d7a8"></div><div class="c" style="left:95.7px;top:183.6px;background:#a2c4c9"></div><div class="c" style="left:113.1px;top:183.6px;background:#a4c2f4"></div><div class="c" style="left:130.4px;top:183.6px;background:#9fc5e8"></div><div class="c" style="left:147.8px;top:183.6px;background:#b4a7d6"></div><div class="c" style="left:165.1px;top:183.6px;background:#d5a6bd"></div>
<div class="c" style="left:8.9px;top:201.0px;background:#cc4125"></div><div class="c" style="left:26.3px;top:201.0px;background:#e06666"></div><div class="c" style="left:43.6px;top:201.0px;background:#f6b26b"></div><div class="c" style="left:61.0px;top:201.0px;background:#ffd966"></div><div class="c" style="left:78.3px;top:201.0px;background:#93c47d"></div><div class="c" style="left:95.7px;top:201.0px;background:#76a5af"></div><div class="c" style="left:113.1px;top:201.0px;background:#6d9eeb"></div><div class="c" style="left:130.4px;top:201.0px;background:#6fa8dc"></div><div class="c" style="left:147.8px;top:201.0px;background:#8e7cc3"></div><div class="c" style="left:165.1px;top:201.0px;background:#c27ba0"></div>
<div class="c" style="left:8.9px;top:218.4px;background:#a61c00"></div><div class="c" style="left:26.3px;top:218.4px;background:#cc0000"></div><div class="c" style="left:43.6px;top:218.4px;background:#e69138"></div><div class="c" style="left:61.0px;top:218.4px;background:#f1c232"></div><div class="c" style="left:78.3px;top:218.4px;background:#6aa84f"></div><div class="c" style="left:95.7px;top:218.4px;background:#45818e"></div><div class="c" style="left:113.1px;top:218.4px;background:#3c78d8"></div><div class="c" style="left:130.4px;top:218.4px;background:#3d85c6"></div><div class="c" style="left:147.8px;top:218.4px;background:#674ea7"></div><div class="c" style="left:165.1px;top:218.4px;background:#a64d79"></div>
<div class="c" style="left:8.9px;top:235.9px;background:#85200c"></div><div class="c" style="left:26.3px;top:235.9px;background:#990000"></div><div class="c" style="left:43.6px;top:235.9px;background:#b45f06"></div><div class="c" style="left:61.0px;top:235.9px;background:#bf9000"></div><div class="c" style="left:78.3px;top:235.9px;background:#38761d"></div><div class="c" style="left:95.7px;top:235.9px;background:#134f5c"></div><div class="c" style="left:113.1px;top:235.9px;background:#1155cc"></div><div class="c" style="left:130.4px;top:235.9px;background:#0b5394"></div><div class="c" style="left:147.8px;top:235.9px;background:#351c75"></div><div class="c" style="left:165.1px;top:235.9px;background:#741b47"></div>
<div class="c" style="left:8.9px;top:253.3px;background:#5b0f00"></div><div class="c" style="left:26.3px;top:253.3px;background:#660000"></div><div class="c" style="left:43.6px;top:253.3px;background:#783f04"></div><div class="c" style="left:61.0px;top:253.3px;background:#7f6000"></div><div class="c" style="left:78.3px;top:253.3px;background:#274e13"></div><div class="c" style="left:95.7px;top:253.3px;background:#0c343d"></div><div class="c" style="left:113.1px;top:253.3px;background:#1c4587"></div><div class="c" style="left:130.4px;top:253.3px;background:#073763"></div><div class="c" style="left:147.8px;top:253.3px;background:#20124d"></div><div class="c" style="left:165.1px;top:253.3px;background:#4c1130"></div>
<svg style="left:29.2px;top:152.6px" width="10" height="8" viewBox="0 0 10 8"><path d="M1 4.200L3.700 6.800L9 1.200" fill="none" stroke="#fff" stroke-width="1.500"/></svg>
<div id="transp"><span>Transparent</span></div>
<svg style="left:58px;top:286.400px" width="16.500" height="16.500" viewBox="0 0 24 24"><path fill="#444746" d="M18 14c0-4-6-10.800-6-10.800s-1.330 1.510-2.730 3.520l8.590 8.590c.09-.42.140-.86.140-1.310zm-.88 3.120L12.500 12.500 5.270 5.270 4 6.550l3.320 3.320C6.550 11.320 6 12.790 6 14c0 3.310 2.690 6 6 6 1.520 0 2.900-.57 3.960-1.500l2.630 2.630 1.270-1.270-2.740-2.740z"/></svg>
</div></div>
<!-- mouse cursor -->
<svg style="left:507.700px;top:91.400px" width="12" height="19" viewBox="0 0 12 19"><path d="M0 0V13.400L3.100 10.500L6.100 17.600L8.500 16.600L5.500 9.700H9.700z" fill="#000" stroke="#fff" stroke-width=".9" stroke-linejoin="round"/></svg>
<!-- SIDE PANEL -->
<svg style="left:994px;top:62.800px" width="15" height="15" viewBox="0 0 15 15">
  <rect x="0" y="0" width="15" height="15" rx="1.800" fill="#fff"/>
  <path d="M0 3.300V1.800A1.800 1.800 0 0 1 1.800 0H13.200A1.800 1.800 0 0 1 15 1.800V3.300z" fill="#4285f4"/>
  <rect x="0" y="3.300" width="3.300" height="8.400" fill="#4285f4"/>
  <rect x="11.700" y="3.300" width="3.300" height="8.400" fill="#fbbc04"/>
  <path d="M0 11.700H11.700V15H1.800A1.800 1.800 0 0 1 0 13.200z" fill="#34a853"/>
  <path d="M11.700 11.700H15L11.700 15z" fill="#ea4335"/>
  <path d="M11.700 0H13.200A1.800 1.800 0 0 1 15 1.800V3.300H11.700z" fill="#1967d2"/>
  <text x="7.500" y="10" text-anchor="middle" font-family="Liberation Sans, sans-serif" font-size="6.500" font-weight="bold" fill="#4285f4">31</text>
</svg>
<svg style="left:994px;top:107.600px" width="15.200" height="15.200" viewBox="0 0 15.200 15.200">
  <rect width="15.200" height="15.200" rx="1.600" fill="#fbb400"/>
  <circle cx="7.600" cy="6.600" r="3.100" fill="#fff"/><rect x="6.100" y="9" width="3" height="1.600" fill="#fff"/><rect x="6.100" y="11" width="3" height="1.100" fill="#fff"/>
</svg>
<svg style="left:993.800px;top:152px" width="16" height="16" viewBox="0 0 16 16">
  <circle cx="7.500" cy="8.300" r="5.300" fill="none" stroke="#1a73e8" stroke-width="2.400"/>
  <path d="M4.900 8.300L6.900 10.300L11 6" fill="none" stroke="#1a73e8" stroke-width="2"/>
  <path d="M11.300 5.700L14.300 2.600" stroke="#0b57d0" stroke-width="2.600"/>
</svg>
<svg style="left:995px;top:196.500px" width="14" height="15" viewBox="0 0 14 15">
  <circle cx="6.500" cy="4.200" r="3.100" fill="#0b57d0"/>
  <path d="M1.400 14.200V11.200Q1.400 8 4.600 8H8.400Q11.600 8 11.600 11.200V14.200z" fill="#0b57d0"/>
  <path d="M1.400 14.200V11.200Q1.400 8.700 3 8.200V14.200z" fill="#4285f4"/>
</svg>
<svg style="left:996.300px;top:242.200px" width="10.600" height="14.800" viewBox="0 0 10.600 14.800">
  <defs><clipPath id="pin"><path d="M5.300 0A5.300 5.300 0 0 1 10.600 5.300C10.600 8.700 6.800 11.300 5.300 14.800C3.800 11.300 0 8.700 0 5.300A5.300 5.300 0 0 1 5.300 0z"/></clipPath></defs>
  <g clip-path="url(#pin)">
    <rect width="10.600" height="14.800" fill="#34a853"/>
    <path d="M0 0H10.600V4L5.300 5.300L1 2z" fill="#4285f4"/>
    <path d="M7 0H10.600V6L5.300 5.300z" fill="#1a73e8"/>
    <path d="M0 1L5.300 5.300L0 9.500z" fill="#ea4335"/>
    <path d="M0 9.500L5.300 5.300L7 7L2.500 12z" fill="#fbbc04"/>
  </g>
  <circle cx="5.300" cy="5.300" r="1.900" fill="#fff"/>
</svg>
<div style="left:993.300px;top:284.500px;width:16.200px;height:1px;background:#dadce0"></div>
<svg style="left:996px;top:314.500px" width="11" height="11" viewBox="0 0 11 11"><path d="M5.500 0V11M0 5.500H11" stroke="#1f1f1f" stroke-width="1.500"/></svg>
<svg style="left:999.500px;top:415px" width="6" height="8" viewBox="0 0 6 8"><path d="M1 .6L4.600 4 1 7.400" fill="none" stroke="#444746" stroke-width="1.300"/></svg>
</div></body></html>
